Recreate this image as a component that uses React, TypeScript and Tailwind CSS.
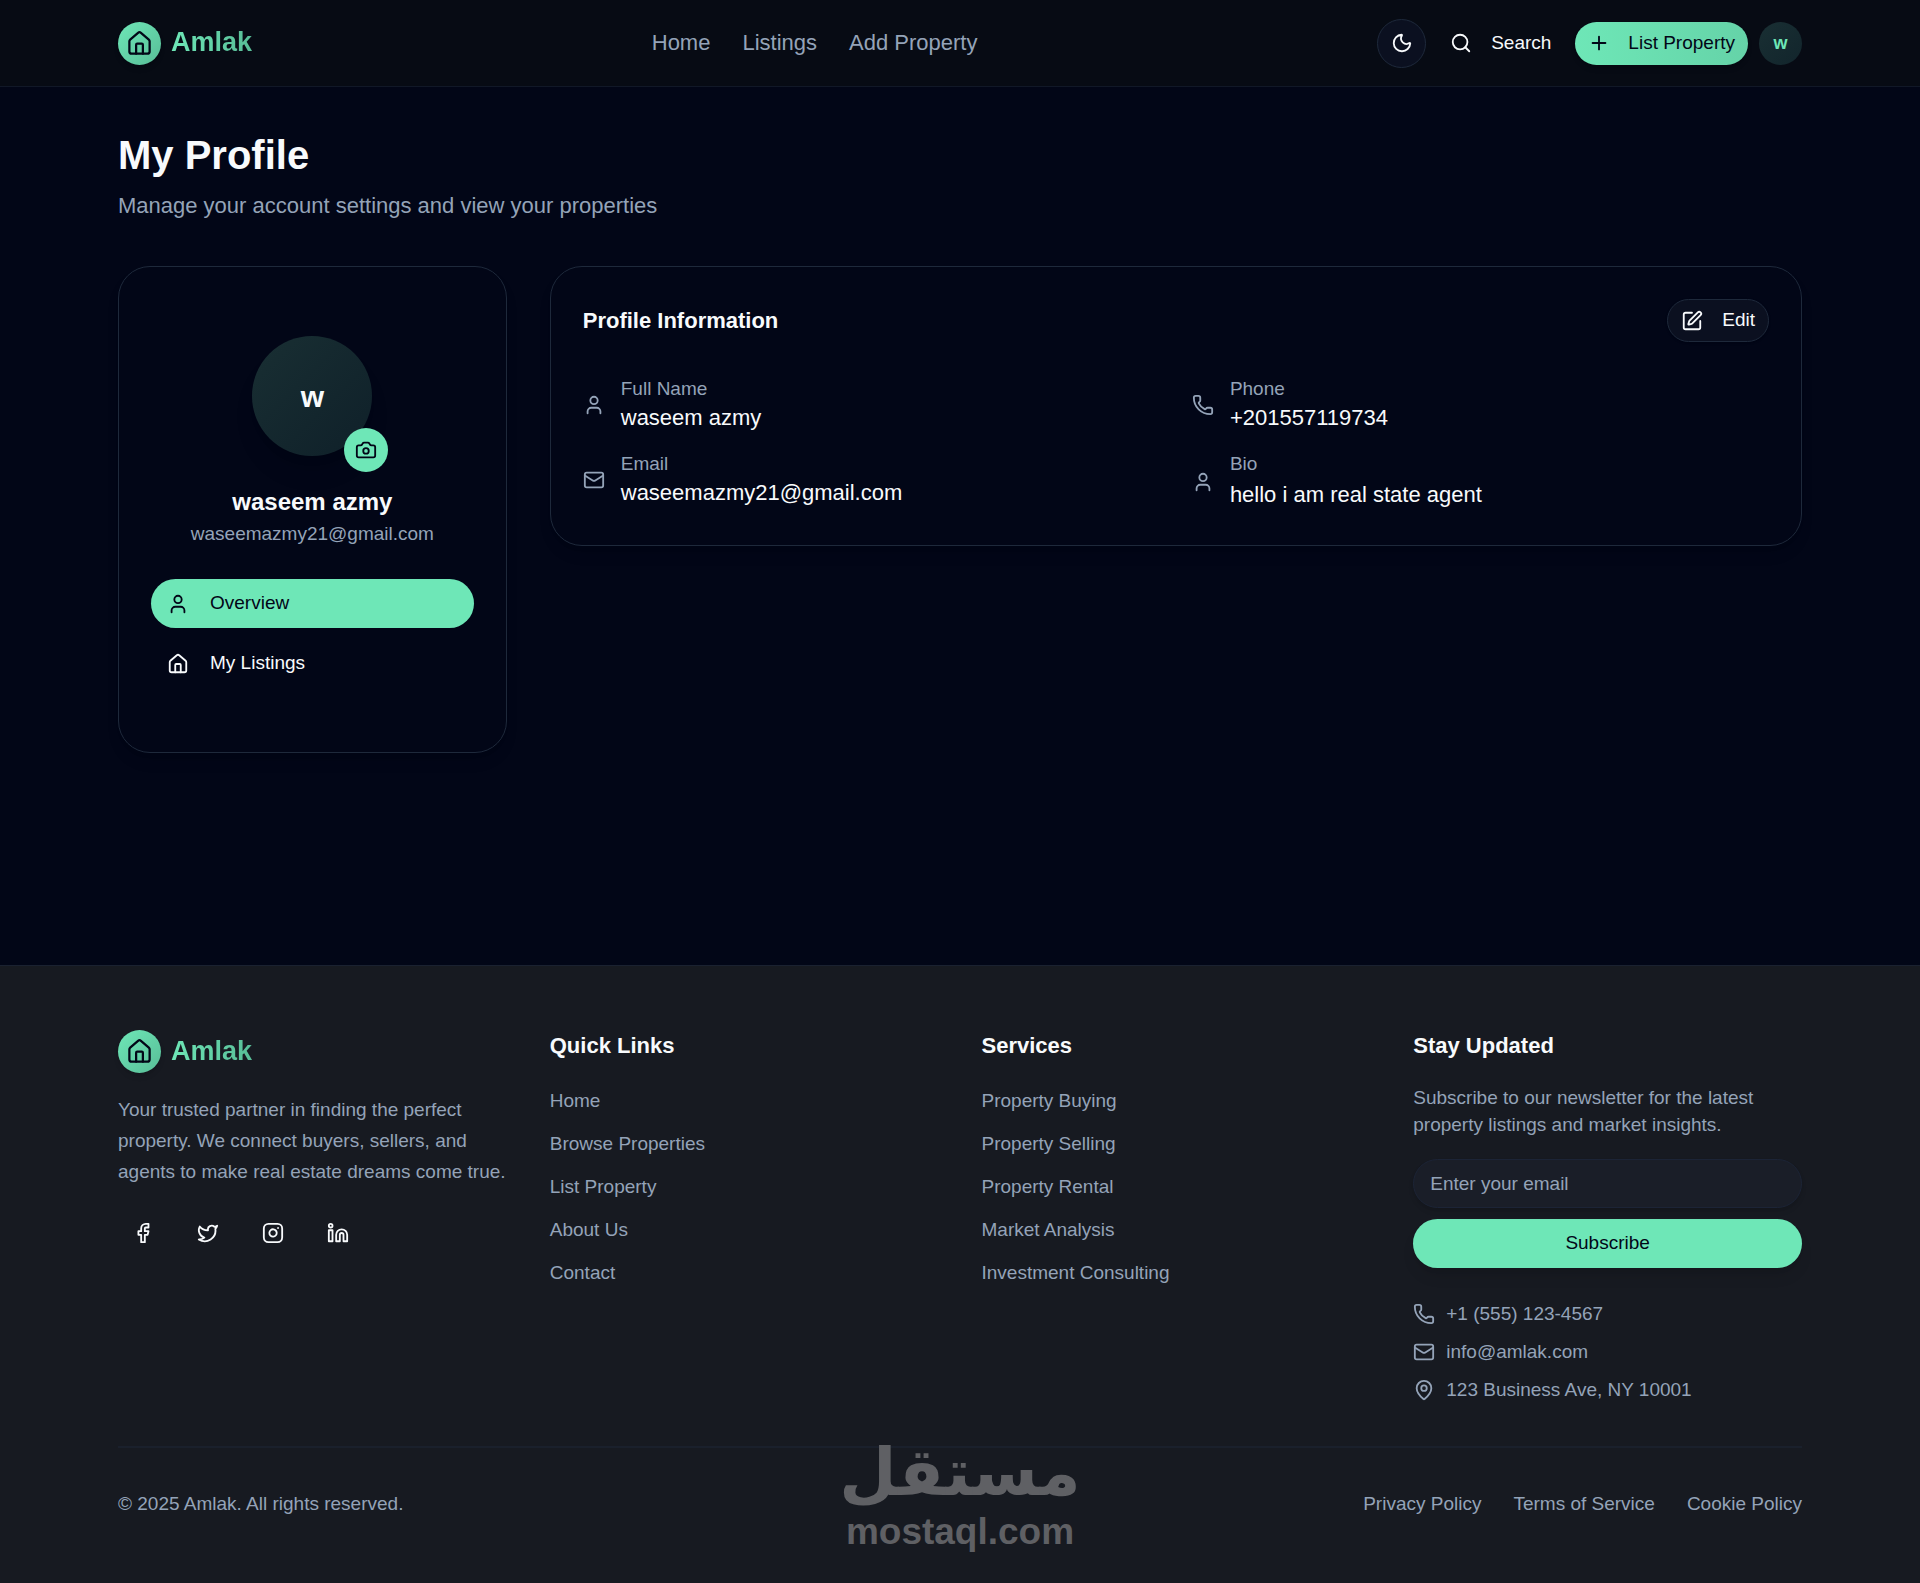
import React from 'react';
import {
  Camera,
  Facebook,
  House,
  Instagram,
  Linkedin,
  Mail,
  MapPin,
  Moon,
  Phone,
  Plus,
  Search,
  SquarePen,
  Twitter,
  User,
} from 'lucide-react';
import type { LucideIcon } from 'lucide-react';

const navLinks = ['Home', 'Listings', 'Add Property'];
const quickLinks = ['Home', 'Browse Properties', 'List Property', 'About Us', 'Contact'];
const services = ['Property Buying', 'Property Selling', 'Property Rental', 'Market Analysis', 'Investment Consulting'];
const legalLinks = ['Privacy Policy', 'Terms of Service', 'Cookie Policy'];

const socials: { label: string; icon: LucideIcon }[] = [
  { label: 'Facebook', icon: Facebook },
  { label: 'Twitter', icon: Twitter },
  { label: 'Instagram', icon: Instagram },
  { label: 'LinkedIn', icon: Linkedin },
];

const contacts: { text: string; icon: LucideIcon }[] = [
  { text: '+1 (555) 123-4567', icon: Phone },
  { text: 'info@amlak.com', icon: Mail },
  { text: '123 Business Ave, NY 10001', icon: MapPin },
];

const Logo: React.FC = () => (
  <a href="#" className="flex items-center gap-[10px]">
    <span className="flex size-[43px] items-center justify-center rounded-full bg-linear-to-br from-[#6ee7b7] to-[#58bd97] text-[#020617] shadow-md">
      <House className="size-[27px]" />
    </span>
    <span className="bg-linear-to-r from-[#6ee7b7] to-[#58bd97] bg-clip-text pb-[2px] text-[27px] leading-9 font-bold text-transparent">
      Amlak
    </span>
  </a>
);

const Header: React.FC = () => (
  <header className="border-b border-[#111827] bg-[#070b14]">
    <div className="mx-auto flex h-[86px] max-w-[1728px] items-center justify-between px-[22px]">
      <Logo />
      <nav className="flex items-center gap-8">
        {navLinks.map((link) => (
          <a key={link} href="#" className="text-[22px] leading-8 text-[#94a3b8]">
            {link}
          </a>
        ))}
      </nav>
      <div className="flex items-center gap-[11px]">
        <button
          type="button"
          aria-label="Toggle theme"
          className="flex size-[49px] items-center justify-center rounded-full border border-[#1e293b] bg-[#0b1020] text-[#f8fafc]"
        >
          <Moon className="size-[22px]" />
        </button>
        <button type="button" className="flex h-[43px] items-center gap-[19px] px-[13px] text-[19px] text-[#f8fafc]">
          <Search className="size-[22px]" />
          Search
        </button>
        <button
          type="button"
          className="flex h-[43px] items-center gap-[18px] rounded-full bg-linear-to-r from-[#6ee7b7] to-[#65d3a8] px-[13px] text-[19px] text-[#020617] shadow-md"
        >
          <Plus className="size-[22px]" />
          List Property
        </button>
        <span className="flex size-[43px] items-center justify-center rounded-full bg-linear-to-br from-[#192f33] to-[#12252c] text-[18px] font-bold text-[#6ee7b7]">
          w
        </span>
      </div>
    </div>
  </header>
);

const ProfileCard: React.FC = () => (
  <aside className="rounded-[32px] border border-[#1e293b] bg-[#020617] px-8 pt-[69px] pb-16 shadow-lg">
    <div className="flex flex-col items-center">
      <div className="relative">
        <div className="flex size-[120px] items-center justify-center rounded-full bg-linear-to-br from-[#192f33] to-[#0f2029] text-[30px] font-bold text-[#f8fafc] shadow-xl">
          w
        </div>
        <button
          type="button"
          aria-label="Change photo"
          className="absolute -right-4 -bottom-4 flex size-11 items-center justify-center rounded-full bg-[#6ee7b7] text-[#020617]"
        >
          <Camera className="size-[22px]" />
        </button>
      </div>
      <h2 className="mt-7 text-[24px] leading-9 font-bold text-[#f8fafc]">waseem azmy</h2>
      <p className="text-[19px] leading-[27px] text-[#94a3b8]">waseemazmy21@gmail.com</p>
    </div>
    <div className="mt-8 flex flex-col gap-[11px]">
      <button
        type="button"
        className="flex h-[49px] items-center gap-[21px] rounded-full bg-[#6ee7b7] px-4 text-[19px] text-[#020617]"
      >
        <User className="size-[22px]" />
        Overview
      </button>
      <button
        type="button"
        className="flex h-[49px] items-center gap-[21px] rounded-full px-4 text-[19px] text-[#f8fafc]"
      >
        <House className="size-[22px]" />
        My Listings
      </button>
    </div>
  </aside>
);

interface InfoItemProps {
  icon: LucideIcon;
  label: string;
  children: React.ReactNode;
}

const InfoItem: React.FC<InfoItemProps> = ({ icon: Icon, label, children }) => (
  <div className="flex items-center gap-4">
    <Icon className="size-[22px] text-[#94a3b8]" />
    <div>
      <p className="text-[19px] leading-[27px] text-[#94a3b8]">{label}</p>
      {children}
    </div>
  </div>
);

const ProfileInformation: React.FC = () => (
  <section className="rounded-[32px] border border-[#1e293b] bg-[#020617] p-8 shadow-lg lg:col-span-3">
    <div className="mb-[33px] flex items-center justify-between">
      <h2 className="text-[22px] leading-8 font-bold text-[#f8fafc]">Profile Information</h2>
      <button
        type="button"
        className="flex h-[43px] items-center gap-[19px] rounded-full border border-[#1e293b] bg-[#0b1020] px-[13px] text-[19px] text-[#f8fafc] shadow-sm"
      >
        <SquarePen className="size-[22px]" />
        Edit
      </button>
    </div>
    <div className="grid items-start gap-x-8 gap-y-4 md:grid-cols-2">
      <InfoItem icon={User} label="Full Name">
        <p className="text-[22px] leading-8 text-[#f8fafc]">waseem azmy</p>
      </InfoItem>
      <InfoItem icon={Phone} label="Phone">
        <p className="text-[22px] leading-8 text-[#f8fafc]">+201557119734</p>
      </InfoItem>
      <InfoItem icon={Mail} label="Email">
        <p className="text-[22px] leading-8 text-[#f8fafc]">waseemazmy21@gmail.com</p>
      </InfoItem>
      <InfoItem icon={User} label="Bio">
        <p className="text-[22px] leading-9 text-[#f8fafc]">hello i am real state agent</p>
      </InfoItem>
    </div>
  </section>
);

const LinkColumn: React.FC<{ title: string; links: string[] }> = ({ title, links }) => (
  <div>
    <h3 className="text-[22px] leading-8 font-bold text-[#f8fafc]">{title}</h3>
    <ul className="mt-[23px] flex flex-col gap-[11px] text-[19px] leading-8 text-[#94a3b8]">
      {links.map((link) => (
        <li key={link}>
          <a href="#">{link}</a>
        </li>
      ))}
    </ul>
  </div>
);

const Footer: React.FC = () => (
  <footer className="relative border-t border-[#1a2130] bg-[#171a21]">
    <div className="mx-auto max-w-[1728px] px-[22px] pt-16 pb-[66px]">
      <div className="grid gap-[43px] md:grid-cols-2 lg:grid-cols-4">
        <div>
          <Logo />
          <p className="mt-[21px] text-[19px] leading-[31px] text-[#94a3b8]">
            Your trusted partner in finding the perfect property. We connect buyers, sellers, and agents to make real
            estate dreams come true.
          </p>
          <div className="mt-[21px] flex gap-4">
            {socials.map(({ label, icon: Icon }) => (
              <a
                key={label}
                href="#"
                aria-label={label}
                className="flex size-[49px] items-center justify-center rounded-full text-[#f8fafc]"
              >
                <Icon className="size-[22px]" />
              </a>
            ))}
          </div>
        </div>
        <LinkColumn title="Quick Links" links={quickLinks} />
        <LinkColumn title="Services" links={services} />
        <div>
          <h3 className="text-[22px] leading-8 font-bold text-[#f8fafc]">Stay Updated</h3>
          <p className="mt-[22px] text-[19px] leading-[27px] text-[#94a3b8]">
            Subscribe to our newsletter for the latest property listings and market insights.
          </p>
          <form className="mt-[21px] flex flex-col gap-[11px]" onSubmit={(e) => e.preventDefault()}>
            <input
              type="email"
              aria-label="Email address"
              placeholder="Enter your email"
              className="h-[49px] w-full rounded-full border border-[#1c2436] bg-[#1a1e28] px-4 text-[19px] text-[#f8fafc] shadow-md placeholder:text-[#94a3b8]"
            />
            <button type="submit" className="h-[49px] rounded-full bg-[#6ee7b7] text-[19px] text-[#020617] shadow-lg">
              Subscribe
            </button>
          </form>
          <ul className="mt-8 flex flex-col gap-[11px]">
            {contacts.map(({ text, icon: Icon }) => (
              <li key={text} className="flex items-center gap-[11px] text-[19px] leading-[27px] text-[#94a3b8]">
                <Icon className="size-[22px]" />
                {text}
              </li>
            ))}
          </ul>
        </div>
      </div>
      <div className="mt-[43px] flex items-center justify-between border-t-2 border-[#1a202c] pt-[42px] text-[19px] leading-[27px] text-[#94a3b8]">
        <p>© 2025 Amlak. All rights reserved.</p>
        <div className="flex gap-8">
          {legalLinks.map((link) => (
            <a key={link} href="#">
              {link}
            </a>
          ))}
        </div>
      </div>
    </div>
    <div className="pointer-events-none absolute inset-x-0 bottom-[30px] flex flex-col items-center text-[#5f6064]">
      <span lang="ar" dir="rtl" className="font-['DejaVu_Sans',sans-serif] text-[66px] leading-[75px] font-bold">
        مستقل
      </span>
      <span className="text-[37px] leading-[43px] font-bold">mostaql.com</span>
    </div>
  </footer>
);

export default function App() {
  return (
    <div className="flex min-h-screen flex-col bg-[#020617] font-['Liberation_Sans',Arial,sans-serif]">
      <Header />
      <main className="mx-auto w-full max-w-[1728px] flex-1 px-[22px] py-11">
        <h1 className="text-[40px] leading-[49px] font-bold text-[#f8fafc]">My Profile</h1>
        <p className="mt-[10px] text-[22px] leading-8 text-[#94a3b8]">
          Manage your account settings and view your properties
        </p>
        <div className="mt-11 grid items-start gap-[43px] lg:grid-cols-4">
          <ProfileCard />
          <ProfileInformation />
        </div>
      </main>
      <Footer />
    </div>
  );
}
